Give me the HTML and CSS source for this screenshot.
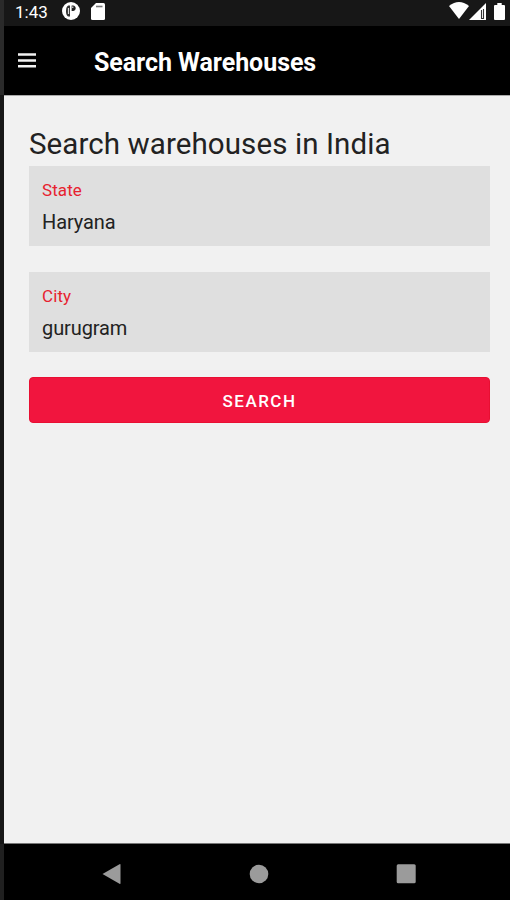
FILE: index.html
```html
<!DOCTYPE html>
<html lang="en">
<head>
<meta charset="utf-8">
<title>Search Warehouses</title>
<link rel="stylesheet" href="styles.css">
</head>
<body>
<div class="device">
  <div class="status">
    <span class="clock">1:43</span>
    <svg class="notify" width="18" height="18" viewBox="0 0 18 18"><circle cx="9" cy="9" r="9" fill="#fff"/><path d="M8 3.500C5 2.800 4 5.500 4 9s1 6 4 5.500z" fill="#333"/><path d="M6.500 6v6" stroke="#ddd" stroke-width="1.200"/><path d="M9.600 3.500v5.500h1.400c3.600-.3 3.600-5.200 0-5.500z" fill="#222"/><path d="M10.800 4.500v1.500" stroke="#fff" stroke-width="1"/></svg>
    <svg class="sd" width="14" height="17" viewBox="0 0 14 17"><path d="M5 0h7.500Q14 0 14 1.500v14Q14 17 12.500 17h-11Q0 17 0 15.500V5z" fill="#fff"/><path d="M5 3.500h6.500" stroke="#777" stroke-width="1.600"/></svg>
    <span class="spacer"></span>
    <svg class="wifi" width="20" height="17" viewBox="0 0 20 17"><path d="M0 4Q10-4 20 4L10 17z" fill="#fff"/></svg>
    <svg class="signal" width="17" height="17" viewBox="0 0 17 17"><path d="M17 0v17H0z" fill="#fff"/><path d="M12.500 7v8.500h2V6" fill="none" stroke="#333" stroke-width="1.100"/></svg>
    <svg class="battery" width="11" height="17" viewBox="0 0 11 17"><path d="M3.300 0h4.400v2H10q1 0 1 1v13q0 1-1 1H1q-1 0-1-1V3q0-1 1-1h2.300z" fill="#fff"/></svg>
  </div>
  <header class="appbar">
    <svg class="menu" width="18" height="15" viewBox="0 0 18 15"><path d="M0 1.500h18M0 7.500h18M0 13.200h18" stroke="#f2f2f2" stroke-width="2.600"/></svg>
    <h1 class="title">Search Warehouses</h1>
  </header>
  <main class="content">
    <h2 class="heading">Search warehouses in India</h2>
    <div class="field"><span class="label">State</span><span class="value">Haryana</span></div>
    <div class="field"><span class="label">City</span><span class="value">gurugram</span></div>
    <button class="search">SEARCH</button>
  </main>
  <nav class="navbar">
    <svg width="20" height="22" viewBox="0 0 20 22"><path d="M.5 11L17.500 1.200q1-.5 1 .5v18.600q0 1-1 .5z" fill="#9b9b9b"/></svg>
    <svg width="20" height="22" viewBox="0 0 20 22"><circle cx="10" cy="11" r="9.300" fill="#9b9b9b"/></svg>
    <svg width="20" height="22" viewBox="0 0 20 22"><rect x=".7" y="1.200" width="19" height="19" rx="1.500" fill="#9b9b9b"/></svg>
  </nav>
</div>
</body>
</html>
```
FILE: styles.css
```css
* { box-sizing: border-box; }
body { margin: 0; font-family: Roboto, "Liberation Sans", sans-serif; background: linear-gradient(#2a2a2a 95px, #171717 95px 844px, #202020 844px); }
.device { height: 900px; margin-left: 4px; display: flex; flex-direction: column; overflow: hidden; }
.status { height: 26px; background: #171717; display: flex; align-items: flex-start; padding: 2px 5px 0 11px; color: #fff; }
.clock { width: 47px; font-size: 17px; line-height: 20px; }
.sd { margin: 1px 0 0 11px; }
.spacer { flex: 1; }
.signal { margin: 1px 8px 0 0; }
.battery { margin-top: 1px; }
.appbar { height: 69px; background: #000; display: flex; align-items: center; padding-left: 14px; }
.title { margin: 5px 0 0 58px; color: #fff; font-size: 25px; font-weight: 700; line-height: 30px; white-space: nowrap; letter-spacing: -.05px; }
.content { height: 749px; background: #f1f1f1; border-bottom: 1px solid #777; border-top: 1px solid #aaa; padding: 29px 20px 0 25px; }
.heading { margin: 0; height: 41px; font-size: 29.500px; line-height: 39px; font-weight: 400; color: #222; white-space: nowrap; letter-spacing: .09px; }
.field { height: 80px; margin-bottom: 26px; padding: 13px 12px 0 13px; background: #dfdfdf; display: flex; flex-direction: column; }
.label { font-size: 17px; line-height: 22px; color: #e7222f; letter-spacing: .1px; }
.value { margin-top: 8px; font-size: 20px; line-height: 26px; color: #222; letter-spacing: -.1px; }
.search { display: block; width: 100%; height: 46px; margin-top: -1px; padding: 1px 0 0; border: 1px solid #e80f32; border-radius: 4px; background: #f1153e; color: #fff; font: 500 17px/20px Roboto, sans-serif; letter-spacing: 1.500px; }
.navbar { height: 56px; background: #000; display: flex; align-items: center; gap: 127px; padding: 3px 0 0 98px; }
```
